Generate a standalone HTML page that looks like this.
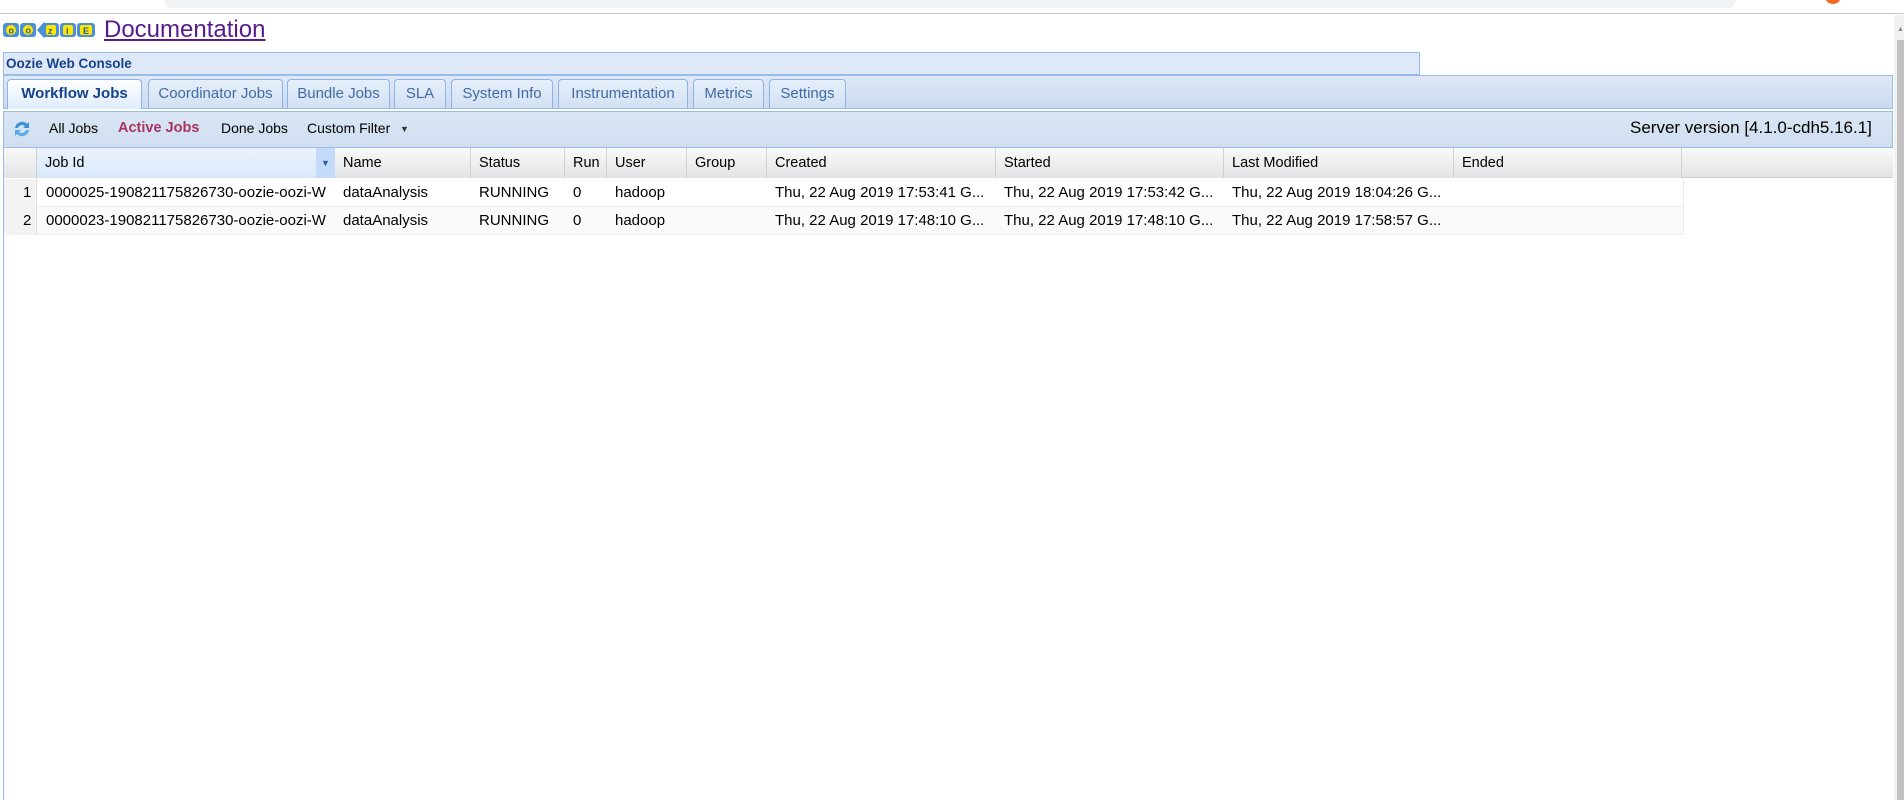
<!DOCTYPE html>
<html><head><meta charset="utf-8"><style>
*{box-sizing:border-box;margin:0;padding:0}
body{width:1904px;height:800px;overflow:hidden;background:#fff;font-family:"Liberation Sans",Tahoma,sans-serif;font-size:14px;color:#000;position:relative}
.a{position:absolute}
.tab{position:absolute;top:79px;height:29px;border:1px solid #8db2e3;border-bottom:none;border-radius:4px 4px 0 0;background:linear-gradient(#e6effa,#d2e1f4);color:#416aa3;text-align:center;line-height:27px;font-size:15px;white-space:nowrap}
.tab.on{background:linear-gradient(#fff,#deecfd);color:#15428b;font-weight:bold;height:30px}
.h{position:absolute;top:148px;height:30px;line-height:30px;padding-left:8px;border-right:1px solid #d0d0d0;font-size:14.5px;white-space:nowrap;background:linear-gradient(#f9f9f9,#e3e4e6)}
.c{position:absolute;height:27px;line-height:27px;padding-left:8px;font-size:15px;white-space:nowrap;overflow:hidden}
</style></head><body>
<div class="a" style="left:0;top:0;width:1904px;height:14px;background:#fff;border-bottom:1px solid #c4c4c4"></div>
<div class="a" style="left:164px;top:0;width:1572px;height:8px;background:#f1f3f4;border-radius:0 0 14px 14px"></div>
<div class="a" style="left:1826px;top:-6px;width:14px;height:10px;border-radius:50%;background:#f06a25"></div>
<svg class="a" style="left:3px;top:19px" width="94" height="22" viewBox="0 0 94 22">
<g fill="#4a90d9"><rect x="0" y="4" width="16" height="14" rx="3"/><rect x="17" y="4" width="16" height="14" rx="3"/><path d="M34 11 L41 3 L48 11 L41 19Z"/><rect x="40" y="4" width="16" height="14" rx="3"/><rect x="57" y="4" width="16" height="14" rx="3"/><rect x="74" y="4" width="18" height="14" rx="3"/></g>
<g fill="#ffe600"><circle cx="8" cy="11" r="5"/><circle cx="25" cy="11" r="5"/><rect x="43" y="6" width="10" height="10" rx="2"/><rect x="60" y="6" width="10" height="10" rx="2"/><rect x="77" y="6" width="12" height="10" rx="2"/></g>
<g fill="#2a5a9a" font-family="Liberation Sans" font-weight="bold" font-size="9"><text x="5.5" y="14.5">o</text><text x="22.5" y="14.5">o</text><text x="45" y="15">z</text><text x="63" y="15">i</text><text x="80" y="15">E</text></g>
</svg>
<a class="a" style="left:104px;top:16px;font-size:24px;color:#551a8b;text-decoration:underline;white-space:nowrap">Documentation</a>
<div class="a" style="left:3px;top:52px;width:1417px;height:23px;background:#dfe8f6;border:1px solid #99bbe8;color:#15428b;font-weight:bold;font-size:13.5px;line-height:21px;padding-left:2px">Oozie Web Console</div>
<div class="a" style="left:3px;top:75px;width:1890px;height:34px;background:linear-gradient(#dfe8f6,#cbdaf0);border:1px solid #99bbe8"></div>
<div class="tab on" style="left:7px;width:135px">Workflow Jobs</div>
<div class="tab" style="left:148px;width:135px">Coordinator Jobs</div>
<div class="tab" style="left:287px;width:103px">Bundle Jobs</div>
<div class="tab" style="left:394px;width:52px">SLA</div>
<div class="tab" style="left:451px;width:102px">System Info</div>
<div class="tab" style="left:558px;width:130px">Instrumentation</div>
<div class="tab" style="left:693px;width:71px">Metrics</div>
<div class="tab" style="left:769px;width:77px">Settings</div>
<div class="a" style="left:3px;top:111px;width:1890px;height:37px;background:linear-gradient(#dae6f4,#d0def0);border:1px solid #99bbe8"></div>
<svg class="a" style="left:12px;top:119px" width="20" height="20" viewBox="0 0 20 20"><path d="M3 9 A7 7 0 0 1 15 5 L17 3 L17 9 L11 9 L13 7 A4.5 4.5 0 0 0 6 9Z" fill="#3d8fd6"/><path d="M17 11 A7 7 0 0 1 5 15 L3 17 L3 11 L9 11 L7 13 A4.5 4.5 0 0 0 14 11Z" fill="#5aaae8"/></svg>
<div class="a" style="left:49px;top:120px;font-size:14px">All Jobs</div>
<div class="a" style="left:118px;top:120px;font-size:14.5px;font-weight:bold;color:#a83262">Active Jobs</div>
<div class="a" style="left:221px;top:120px;font-size:14px">Done Jobs</div>
<div class="a" style="left:307px;top:120px;font-size:14px">Custom Filter</div>
<div class="a" style="left:400px;top:124px;font-size:9px;color:#333">▼</div>
<div class="a" style="left:1630px;top:118px;font-size:17px;white-space:nowrap">Server version [4.1.0-cdh5.16.1]</div>
<div class="a" style="left:3px;top:148px;width:1px;height:652px;background:#99bbe8"></div>
<div class="a" style="left:4px;top:148px;width:1889px;height:30px;background:linear-gradient(#f9f9f9,#e3e4e6);border-bottom:1px solid #d0d0d0"></div>
<div class="h" style="left:4px;width:33px"></div>
<div class="h" style="left:37px;width:298px;background:linear-gradient(#ebf3fd,#d9e8fb)">Job Id</div>
<div class="a" style="left:316px;top:148px;width:19px;height:30px;background:#c3daf9;color:#2e5a99;font-size:9px;text-align:center;line-height:30px">▼</div>
<div class="h" style="left:335px;width:136px">Name</div>
<div class="h" style="left:471px;width:94px">Status</div>
<div class="h" style="left:565px;width:42px">Run</div>
<div class="h" style="left:607px;width:80px">User</div>
<div class="h" style="left:687px;width:80px">Group</div>
<div class="h" style="left:767px;width:229px">Created</div>
<div class="h" style="left:996px;width:228px">Started</div>
<div class="h" style="left:1224px;width:230px">Last Modified</div>
<div class="h" style="left:1454px;width:228px">Ended</div>
<div class="a" style="left:4px;top:179px;width:1680px;height:28px;border-bottom:1px solid #ededed;border-right:1px solid #ededed"></div>
<div class="a" style="left:4px;top:207px;width:1680px;height:28px;background:#fafafa;border-bottom:1px solid #ededed;border-right:1px solid #ededed"></div>
<div class="a" style="left:4px;top:179px;width:33px;height:56px;background:#f3f3f3;border-right:1px solid #e0e0e0"></div>
<div class="c" style="left:15px;top:179px">1</div>
<div class="c" style="left:15px;top:207px">2</div>
<div class="c" style="left:38px;top:179px;width:297px">0000025-190821175826730-oozie-oozi-W</div>
<div class="c" style="left:38px;top:207px;width:297px">0000023-190821175826730-oozie-oozi-W</div>
<div class="c" style="left:335px;top:179px">dataAnalysis</div><div class="c" style="left:335px;top:207px">dataAnalysis</div>
<div class="c" style="left:471px;top:179px">RUNNING</div><div class="c" style="left:471px;top:207px">RUNNING</div>
<div class="c" style="left:565px;top:179px">0</div><div class="c" style="left:565px;top:207px">0</div>
<div class="c" style="left:607px;top:179px">hadoop</div><div class="c" style="left:607px;top:207px">hadoop</div>
<div class="c" style="left:767px;top:179px">Thu, 22 Aug 2019 17:53:41 G...</div><div class="c" style="left:767px;top:207px">Thu, 22 Aug 2019 17:48:10 G...</div>
<div class="c" style="left:996px;top:179px">Thu, 22 Aug 2019 17:53:42 G...</div><div class="c" style="left:996px;top:207px">Thu, 22 Aug 2019 17:48:10 G...</div>
<div class="c" style="left:1224px;top:179px">Thu, 22 Aug 2019 18:04:26 G...</div><div class="c" style="left:1224px;top:207px">Thu, 22 Aug 2019 17:58:57 G...</div>
<div class="a" style="left:1894px;top:15px;width:10px;height:785px;background:#f1f1f1"></div>
<div class="a" style="left:1897px;top:40px;width:7px;height:760px;background:#c1c1c1"></div>
<div class="a" style="left:1897px;top:26px;font-size:7px;color:#888">▲</div>
</body></html>
